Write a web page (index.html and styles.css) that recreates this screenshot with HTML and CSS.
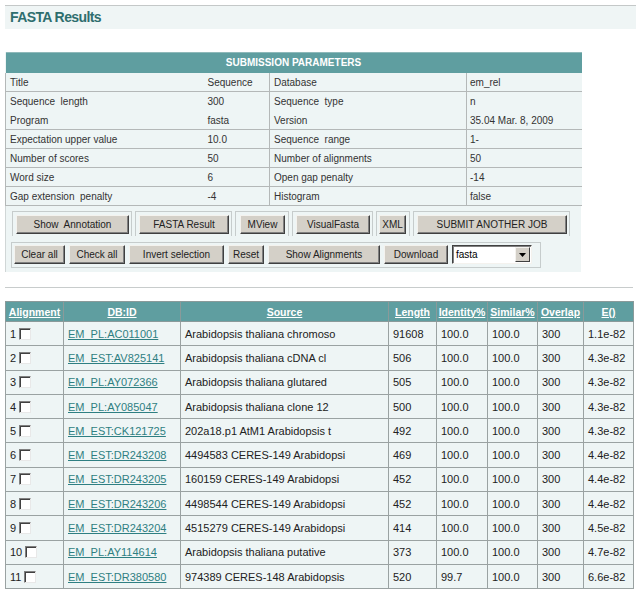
FILE: index.html
```html
<!DOCTYPE html>
<html>
<head>
<meta charset="utf-8">
<link rel="stylesheet" href="styles.css">
</head>
<body>
<div class="page">
  <div class="title-bar"><h1>FASTA Results</h1></div>

  <div class="params">
    <table class="ptable">
      <colgroup><col class="k1"><col class="k2"><col class="k3"><col class="k4"></colgroup>
      <tr><th colspan="4">SUBMISSION PARAMETERS</th></tr>
      <tr class="line"><td class="c1">Title</td><td class="c2">Sequence</td><td class="c3">Database</td><td class="c4">em_rel</td></tr>
      <tr><td class="c1">Sequence&nbsp; length</td><td class="c2">300</td><td class="c3">Sequence&nbsp; type</td><td class="c4">n</td></tr>
      <tr class="line"><td class="c1">Program</td><td class="c2">fasta</td><td class="c3">Version</td><td class="c4">35.04 Mar. 8, 2009</td></tr>
      <tr class="line"><td class="c1">Expectation upper value</td><td class="c2">10.0</td><td class="c3">Sequence&nbsp; range</td><td class="c4">1-</td></tr>
      <tr class="line"><td class="c1">Number of scores</td><td class="c2">50</td><td class="c3">Number of alignments</td><td class="c4">50</td></tr>
      <tr class="line"><td class="c1">Word size</td><td class="c2">6</td><td class="c3">Open gap penalty</td><td class="c4">-14</td></tr>
      <tr class="line"><td class="c1">Gap extension&nbsp; penalty</td><td class="c2">-4</td><td class="c3">Histogram</td><td class="c4">false</td></tr>
    </table>
    <div class="actions">
      <div class="row1">
        <div class="grp"><button class="btn w113">Show&nbsp; Annotation</button></div>
        <div class="grp"><button class="btn w90">FASTA Result</button></div>
        <div class="grp g-mview"><button class="btn w45">MView</button></div>
        <div class="grp"><button class="btn w74">VisualFasta</button></div>
        <div class="grp g-xml"><button class="btn w27">XML</button></div>
        <div class="grp"><button class="btn w150">SUBMIT ANOTHER JOB</button></div>
      </div>
      <div class="row2">
        <button class="btn w51">Clear all</button>
        <button class="btn w56">Check all</button>
        <button class="btn w95">Invert selection</button>
        <button class="btn w36">Reset</button>
        <button class="btn w112">Show Alignments</button>
        <button class="btn w64">Download</button>
        <div class="select"><span class="sel-text">fasta</span><span class="sel-btn"><svg width="7" height="4" viewBox="0 0 7 4"><path d="M0 0h7L3.5 4z" fill="#000"/></svg></span></div>
      </div>
    </div>
  </div>

  <div class="rule"></div>

  <table class="results">
    <colgroup>
      <col class="r1"><col class="r2"><col class="r3"><col class="r4"><col class="r5"><col class="r6"><col class="r7"><col class="r8">
    </colgroup>
    <thead>
      <tr><th><a>Alignment</a></th><th><a>DB:ID</a></th><th><a>Source</a></th><th><a>Length</a></th><th><a>Identity%</a></th><th><a>Similar%</a></th><th><a>Overlap</a></th><th><a>E()</a></th></tr>
    </thead>
    <tbody>
      <tr><td>1 <span class="cb"></span></td><td><a>EM_PL:AC011001</a></td><td>Arabidopsis thaliana chromoso</td><td>91608</td><td>100.0</td><td>100.0</td><td>300</td><td>1.1e-82</td></tr>
      <tr><td>2 <span class="cb"></span></td><td><a>EM_EST:AV825141</a></td><td>Arabidopsis thaliana cDNA cl</td><td>506</td><td>100.0</td><td>100.0</td><td>300</td><td>4.3e-82</td></tr>
      <tr><td>3 <span class="cb"></span></td><td><a>EM_PL:AY072366</a></td><td>Arabidopsis thaliana glutared</td><td>505</td><td>100.0</td><td>100.0</td><td>300</td><td>4.3e-82</td></tr>
      <tr><td>4 <span class="cb"></span></td><td><a>EM_PL:AY085047</a></td><td>Arabidopsis thaliana clone 12</td><td>500</td><td>100.0</td><td>100.0</td><td>300</td><td>4.3e-82</td></tr>
      <tr><td>5 <span class="cb"></span></td><td><a>EM_EST:CK121725</a></td><td>202a18.p1 AtM1 Arabidopsis t</td><td>492</td><td>100.0</td><td>100.0</td><td>300</td><td>4.3e-82</td></tr>
      <tr><td>6 <span class="cb"></span></td><td><a>EM_EST:DR243208</a></td><td>4494583 CERES-149 Arabidopsi</td><td>469</td><td>100.0</td><td>100.0</td><td>300</td><td>4.4e-82</td></tr>
      <tr><td>7 <span class="cb"></span></td><td><a>EM_EST:DR243205</a></td><td>160159 CERES-149 Arabidopsi</td><td>452</td><td>100.0</td><td>100.0</td><td>300</td><td>4.4e-82</td></tr>
      <tr><td>8 <span class="cb"></span></td><td><a>EM_EST:DR243206</a></td><td>4498544 CERES-149 Arabidopsi</td><td>452</td><td>100.0</td><td>100.0</td><td>300</td><td>4.4e-82</td></tr>
      <tr><td>9 <span class="cb"></span></td><td><a>EM_EST:DR243204</a></td><td>4515279 CERES-149 Arabidopsi</td><td>414</td><td>100.0</td><td>100.0</td><td>300</td><td>4.5e-82</td></tr>
      <tr><td>10 <span class="cb"></span></td><td><a>EM_PL:AY114614</a></td><td>Arabidopsis thaliana putative</td><td>373</td><td>100.0</td><td>100.0</td><td>300</td><td>4.7e-82</td></tr>
      <tr><td>11 <span class="cb"></span></td><td><a>EM_EST:DR380580</a></td><td>974389 CERES-148 Arabidopsis</td><td>520</td><td>99.7</td><td>100.0</td><td>300</td><td>6.6e-82</td></tr>
    </tbody>
  </table>
</div>
</body>
</html>
```
FILE: styles.css
```css
* { box-sizing: border-box; }
html, body { margin: 0; padding: 0; background: #fff; }
body { font-family: "Liberation Sans", Arial, sans-serif; color: #222; }

.page { padding: 5px 0 0 5px; }

.title-bar {
  border-top: 1px solid #c4c8c8;
  background: #eff5f5;
  height: 24px;
  padding: 3px 0 0 5px;
}
.title-bar h1 {
  margin: 0;
  font-size: 14px;
  font-weight: bold;
  letter-spacing: -0.6px;
  color: #2e6e6e;
  line-height: 16px;
}

.params { width: 576px; margin-top: 23px; }

.ptable {
  width: 576px;
  border-collapse: collapse;
  table-layout: fixed;
  font-size: 10px;
  color: #333;
  background: #eef5f5;
}
.ptable .k1 { width: 199px; }
.ptable .k2 { width: 65px; }
.ptable .k3 { width: 197px; }
.ptable .k4 { width: 115px; }
.ptable th {
  background: #5f9ea0;
  color: #fff;
  font-weight: bold;
  height: 20px;
  padding: 0;
  text-align: center;
  border-top: 1px solid #8fb9ba;
}
.ptable td {
  height: 19px;
  padding: 1px 0 0 4px;
  white-space: nowrap;
  overflow: hidden;
}
.ptable tr.line td { border-bottom: 1px solid #b4b8b8; }
.ptable .c1 { border-left: 1px solid #b4b8b8; }
.ptable .c2 { padding-left: 3px; }
.ptable .c3 { border-left: 1px solid #b4b8b8; }
.ptable .c4 { border-left: 1px solid #b4b8b8; padding-left: 3px; }

.actions {
  background: #eef5f5;
  border-left: 1px solid #d0d6d6;
  height: 66px;
  padding: 5px 0 0 6px;
}
.row1 { display: flex; gap: 3px; height: 25px; }
.grp {
  border: 1px solid #c6cccc;
  border-bottom: none;
  padding: 2px 2px 0 3px;
}
.g-mview { padding-left: 4px; padding-right: 3px; }
.g-xml { padding-left: 2px; padding-right: 3px; }

.row2 {
  margin-top: 6px;
  margin-left: -1px;
  width: 530px;
  border: 1px solid #c6cccc;
  height: 26px;
  padding: 2px 0 0 2px;
  display: flex;
  gap: 4px;
}

.btn {
  font-family: "Liberation Sans", Arial, sans-serif;
  font-size: 10px;
  color: #222;
  background: #d4d0c8;
  height: 19px;
  padding: 0;
  margin: 0;
  border: 1px solid;
  border-color: #f4f2ee #404040 #404040 #f4f2ee;
  box-shadow: inset -1px -1px 0 #808080;
  text-align: center;
  white-space: nowrap;
}
.w113 { width: 113px; }
.w90 { width: 90px; }
.w45 { width: 45px; }
.w74 { width: 74px; }
.w27 { width: 27px; }
.w150 { width: 150px; }
.w51 { width: 51px; }
.w56 { width: 56px; }
.w95 { width: 95px; }
.w36 { width: 36px; }
.w112 { width: 112px; }
.w64 { width: 64px; }

.select {
  width: 80px;
  height: 19px;
  background: #fff;
  border: 1px solid;
  border-color: #404040 #f4f2ee #f4f2ee #404040;
  box-shadow: inset 1px 1px 0 #808080;
  display: flex;
  align-items: center;
  justify-content: space-between;
  padding: 1px 1px 1px 3px;
  font-size: 10px;
  color: #000;
}
.sel-btn {
  width: 15px;
  height: 15px;
  background: #d4d0c8;
  border: 1px solid;
  border-color: #f4f2ee #404040 #404040 #f4f2ee;
  display: flex;
  align-items: center;
  justify-content: center;
}

.rule {
  margin-top: 15px;
  width: 628px;
  border-top: 1px solid #c8cccc;
}

.results {
  margin-top: 13px;
  width: 628px;
  border-collapse: collapse;
  table-layout: fixed;
  font-size: 11px;
  background: #eef5f5;
}
.results .r1 { width: 58px; }
.results .r2 { width: 117px; }
.results .r3 { width: 208px; }
.results .r4 { width: 48px; }
.results .r5 { width: 51px; }
.results .r6 { width: 50px; }
.results .r7 { width: 46px; }
.results .r8 { width: 50px; }
.results th {
  background: #5f9ea0;
  color: #fff;
  font-weight: bold;
  font-size: 10.5px;
  height: 20px;
  padding: 0;
  text-align: center;
  border: 1px solid #8a9a9a;
}
.results th a { color: #fff; text-decoration: underline; }
.results td {
  height: 24.3px;
  padding: 0 0 0 4px;
  border: 1px solid #9aa2a2;
  white-space: nowrap;
  overflow: hidden;
  color: #222;
}
.results td a { color: #2e7f82; text-decoration: underline; }
.cb {
  display: inline-block;
  width: 12px;
  height: 12px;
  vertical-align: -2px;
  background: #fff;
  border: 1px solid;
  border-color: #808080 #e8e8e8 #e8e8e8 #808080;
  box-shadow: inset 1px 1px 0 #404040;
}
```
